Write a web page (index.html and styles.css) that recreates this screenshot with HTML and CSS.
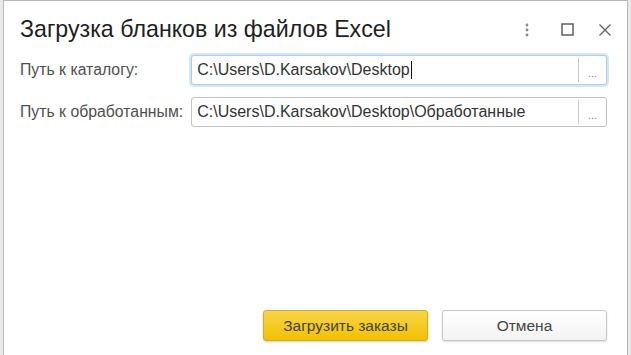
FILE: index.html
```html
<!DOCTYPE html>
<html lang="ru">
<head>
    <meta charset="UTF-8">
    <meta name="viewport" content="width=device-width, initial-scale=1.0">
    <title>Загрузка бланков из файлов Excel</title>
    <link rel="stylesheet" href="styles.css">
</head>
<body>

<div class="okno">
    <div class="zagolovok">
        <h1>Загрузка бланков из файлов Excel</h1>
        <div class="knopki-okna">
            <span class="ikonka menu">
                <svg width="6" height="16" viewBox="0 0 6 16"><circle cx="3" cy="3" r="1.4" fill="#8a8a8a"/><circle cx="3" cy="8" r="1.4" fill="#8a8a8a"/><circle cx="3" cy="13" r="1.4" fill="#8a8a8a"/></svg>
            </span>
            <span class="ikonka razvernut">
                <svg width="13" height="13" viewBox="0 0 13 13"><rect x="1" y="1" width="11" height="11" fill="none" stroke="#555" stroke-width="1.4"/></svg>
            </span>
            <span class="ikonka">
                <svg width="14" height="14" viewBox="0 0 14 14"><path d="M1.5 1.5 L12.5 12.5 M12.5 1.5 L1.5 12.5" stroke="#666" stroke-width="1.4"/></svg>
            </span>
        </div>
    </div>

    <div class="forma">
        <label>Путь к каталогу:</label>
        <div class="pole aktivnoe">
            <span class="tekst">C:\Users\D.Karsakov\Desktop<span class="kursor"></span></span>
            <span class="vybor">...</span>
        </div>

        <label>Путь к обработанным:</label>
        <div class="pole">
            <span class="tekst">C:\Users\D.Karsakov\Desktop\Обработанные</span>
            <span class="vybor">...</span>
        </div>
    </div>

    <div class="niz">
        <button class="btn-zagruzit">Загрузить заказы</button>
        <button class="btn-otmena">Отмена</button>
    </div>
</div>

</body>
</html>
```

FILE: styles.css
```css
html, body {
    margin: 0;
    height: 100%;
    overflow: hidden;
}
body {
    font-family: "Liberation Sans", Arial, sans-serif;
    background: #e9e9e9;
    padding-left: 3px;
    box-sizing: border-box;
}
.okno {
    width: 625px;
    height: 100%;
    box-sizing: border-box;
    background: #fff;
    border: 1px solid #b9b9b9;
    border-bottom: none;
    display: flex;
    flex-direction: column;
}
.zagolovok {
    display: flex;
    align-items: center;
    justify-content: space-between;
    padding: 13px 15px 0 16px;
    height: 31px;
}
.zagolovok h1 {
    margin: 0;
    font-size: 23.2px;
    font-weight: normal;
    color: #1e1e1e;
}
.knopki-okna {
    display: flex;
    align-items: center;
}
.ikonka {
    display: flex;
    align-items: center;
}
.ikonka.menu {
    margin-right: 31px;
}
.ikonka.razvernut {
    margin-right: 24px;
}
.forma {
    display: grid;
    grid-template-columns: auto 1fr;
    column-gap: 8px;
    row-gap: 12px;
    align-items: center;
    padding: 10px 20px 0 16px;
}
.forma label {
    font-size: 15.8px;
    color: #4f4f4f;
}
.pole {
    display: flex;
    height: 30px;
    box-sizing: border-box;
    border: 1px solid #c4c4c4;
    border-radius: 3px;
    background: #fff;
}
.pole.aktivnoe {
    border-color: #a9cdf0;
    box-shadow: 0 0 0 2px #d4e7fa;
}
.tekst {
    flex: 1;
    display: flex;
    align-items: center;
    padding-left: 5px;
    font-size: 16px;
    color: #333;
    white-space: nowrap;
}
.kursor {
    display: inline-block;
    width: 1px;
    height: 18px;
    background: #111;
    margin-left: 1px;
}
.vybor {
    width: 27px;
    border-left: 1px solid #c9c9c9;
    margin: 2px 0;
    text-align: center;
    font-size: 11px;
    color: #8c8c8c;
    line-height: 30px;
}
.niz {
    margin-top: auto;
    display: flex;
    justify-content: flex-end;
    gap: 14px;
    padding: 0 20px 14px 0;
}
.niz button {
    width: 165px;
    height: 31px;
    border-radius: 3px;
    font-family: "Liberation Sans", Arial, sans-serif;
    font-size: 15.5px;
    color: #444;
}
.btn-zagruzit {
    background: linear-gradient(#f8d549, #f1c100);
    border: 1px solid #d8ad1c;
    box-shadow: 0 1px 2px rgba(0, 0, 0, 0.2);
}
.btn-otmena {
    background: linear-gradient(#fff, #f3f3f3);
    border: 1px solid #c6c6c6;
    box-shadow: 0 1px 2px rgba(0, 0, 0, 0.15);
}
```
